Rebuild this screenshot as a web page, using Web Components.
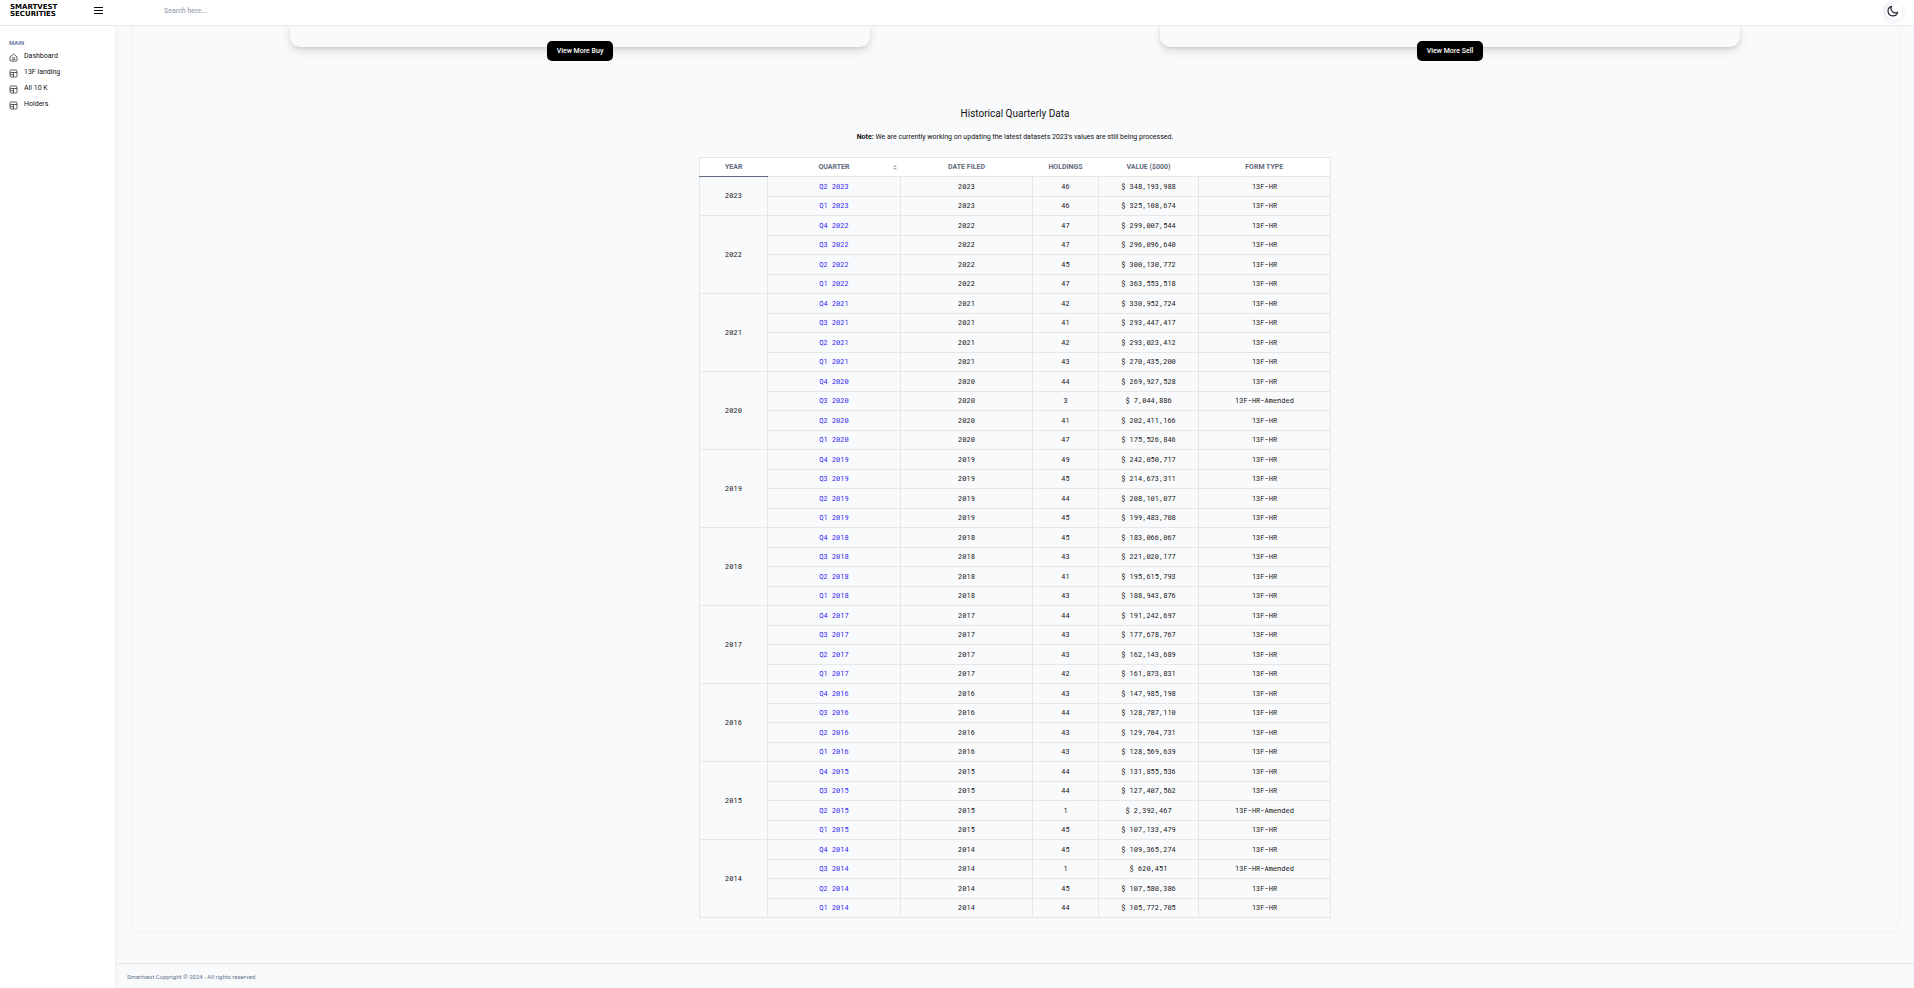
<!DOCTYPE html>
<html lang="en">
<head>
<meta charset="utf-8">
<title>Smartvest Securities</title>
<style>
  html, body { margin: 0; height: 100%; }
  body { font: 7px/10px Roboto, sans-serif; color: #111; background: #f9fafc; }
</style>
</head>
<body>
<smart-app></smart-app>
<script>
class BaseElement extends HTMLElement {
  constructor() {
    super();
    this.attachShadow({ mode: 'open' }).innerHTML = this.render();
  }
}

customElements.define('smart-logo', class extends BaseElement {
  render() {
    return `<style>
      :host { display: block; }
      a { display: block; color: #000; text-decoration: none; font: 700 7px/7px "DejaVu Sans", sans-serif; }
      span { display: block; }
    </style><a href="#"><span>SMARTVEST</span><span>SECURITIES</span></a>`;
  }
});

customElements.define('smart-header', class extends BaseElement {
  render() {
    return `<style>
      :host { display: flex; align-items: center; box-sizing: border-box; height: 26px; padding: 0 11px 4px 10px;
        background: #fff; border-bottom: 1px solid #e5e7eb; }
      smart-logo { width: 84px; }
      button { border: 0; padding: 0; background: none; display: block; }
      svg { display: block; }
      input { flex: 1; margin-left: 61px; padding: 0; border: 0; outline: 0; background: none;
        font: 500 7px/10px Roboto, sans-serif; color: #111; }
      input::placeholder { color: #a0a8b5; opacity: 1; }
      .theme { width: 20px; height: 20px; border-radius: 50%; display: grid; place-items: center;
        background: #fff; box-shadow: inset 3px 1px 4px #e8edf6, 1px 2px 4px #eef1f6; }
    </style>
    <smart-logo></smart-logo>
    <button aria-label="Toggle menu"><svg width="9" height="7" viewBox="0 0 9 7"><path d="M0 0h9v1H0zM0 3h9v1H0zM0 6h9v1H0z"/></svg></button>
    <input type="search" aria-label="Search" placeholder="Search here...">
    <button class="theme" aria-label="Dark mode"><svg width="12" height="12" viewBox="0 0 12 12" fill="none" stroke="#262a30" stroke-width="1.2" stroke-linejoin="round"><path d="M4.600 1.300a4.400 4.400 0 0 0 6.100 5.900A4.900 4.900 0 1 1 4.600 1.300z"/></svg></button>`;
  }
});

const ICONS = {
  home: '<path d="M1 4 4.500 1 8 4v3.200a.9.9 0 0 1-.9.9H1.900a.9.9 0 0 1-.9-.9z"/><path d="M2.700 6.300h3.600M3.200 4.800h2.600"/>',
  table: '<rect x="1" y="1" width="7" height="7" rx="1"/><path d="M1 3.500h7M4.500 3.500V8M1 5.700h3"/>'
};
customElements.define('nav-item', class extends HTMLElement {
  connectedCallback() {
    this.attachShadow({ mode: 'open' }).innerHTML = `<style>
      :host { display: block; height: 16px; }
      a { display: flex; align-items: flex-start; gap: 6px; color: #111318; text-decoration: none; }
      svg { margin-top: 2px; flex: none; }
    </style><a href="#"><svg width="9" height="9" viewBox="0 0 9 9" fill="none" stroke="#4a4a4a" stroke-width=".9">${ICONS[this.getAttribute('icon')]}</svg><slot></slot></a>`;
  }
});

customElements.define('smart-sidebar', class extends BaseElement {
  render() {
    return `<style>
      :host { display: block; background: #fff; padding: 12px 8px 12px 9px; box-shadow: 1px 0 5px rgba(0,0,0,.05); }
      h2 { margin: 0 0 3px; font: 700 6px/10px Roboto, sans-serif; color: #6b7ba3; }
    </style>
    <h2>MAIN</h2>
    <nav>
      <nav-item icon="home">Dashboard</nav-item>
      <nav-item icon="table">13F landing</nav-item>
      <nav-item icon="table">All 10 K</nav-item>
      <nav-item icon="table">Holders</nav-item>
    </nav>`;
  }
});

customElements.define('holding-card', class extends BaseElement {
  render() {
    return `<style>
      :host { display: flex; flex-direction: column; align-items: center; }
      .card { width: 66.667%; height: 21px; border-radius: 0 0 10px 10px; background: #f9fafc;
        box-shadow: 0 4px 8px rgba(0,0,0,.13), 0 1px 3px rgba(0,0,0,.09); }
      button { margin-top: -6px; height: 20px; min-width: 66px; padding: 0 9px; border: 0; border-radius: 5px;
        background: #000; color: #fff; font: 500 7px/20px Roboto, sans-serif; }
    </style><div class="card"></div><button><slot></slot></button>`;
  }
});

const AMENDED = '13F-HR-Amended';
const FILINGS = [
  [2023, [[46, '348,193,988'], [46, '325,108,674']]],
  [2022, [[47, '299,007,544'], [47, '296,096,640'], [45, '300,130,772'], [47, '363,553,518']]],
  [2021, [[42, '330,952,724'], [41, '293,447,417'], [42, '293,023,412'], [43, '270,435,200']]],
  [2020, [[44, '269,927,528'], [3, '7,044,886', AMENDED], [41, '202,411,166'], [47, '175,526,846']]],
  [2019, [[49, '242,050,717'], [45, '214,673,311'], [44, '208,101,077'], [45, '199,483,708']]],
  [2018, [[45, '183,066,067'], [43, '221,020,177'], [41, '195,615,793'], [43, '188,943,876']]],
  [2017, [[44, '191,242,697'], [43, '177,678,767'], [43, '162,143,689'], [42, '161,873,831']]],
  [2016, [[43, '147,985,198'], [44, '128,787,110'], [43, '129,704,731'], [43, '128,569,639']]],
  [2015, [[44, '131,855,536'], [44, '127,407,562'], [1, '2,392,467', AMENDED], [45, '107,133,479']]],
  [2014, [[45, '109,365,274'], [1, '620,451', AMENDED], [45, '107,580,386'], [44, '105,772,705']]]
];
customElements.define('filings-table', class extends BaseElement {
  render() {
    const rows = FILINGS.map(([year, quarters]) => quarters.map(([holdings, value, form = '13F-HR'], i) =>
      `<tr>${i ? '' : `<td rowspan="${quarters.length}">${year}</td>`}<td><a href="#">Q${quarters.length - i} ${year}</a></td><td>${year}</td><td>${holdings}</td><td>$ ${value}</td><td>${form}</td></tr>`
    ).join('')).join('');
    return `<style>
      :host { display: block; width: 100%; max-width: 632px; margin: 0 auto; }
      table { width: 100%; table-layout: fixed; border-collapse: collapse; text-align: center; }
      th, td { padding: 0; }
      thead { background: #fff; }
      thead tr { height: 19px; border: 1px solid #e5e7eb; }
      th { font-weight: 700; color: #626a80; }
      th:first-child { border-bottom: 1px solid #626a80; }
      .sortable { display: grid; grid-template-columns: 1fr auto 1fr; align-items: center; }
      .sortable span { grid-column: 2; }
      .sortable button { justify-self: end; margin-right: 4px; border: 0; padding: 0; background: none; }
      svg { display: block; }
      td { border: 1px solid #e5e7eb; font: 7px/10px "Roboto Mono", "Liberation Mono", monospace; }
      tbody tr:nth-child(odd) { height: 20px; }
      tbody tr:nth-child(even) { height: 19px; }
      a { color: #2b1cf5; text-decoration: none; }
      .year { width: 68px; } .quarter { width: 133px; } .wide { width: 132px; }
      .holdings { width: 66px; } .value { width: 100px; }
    </style>
    <table>
      <colgroup><col class="year"><col class="quarter"><col class="wide"><col class="holdings"><col class="value"><col class="wide"></colgroup>
      <thead><tr><th>YEAR</th><th><div class="sortable"><span>QUARTER</span><button aria-label="Sort by quarter"><svg width="4" height="5" viewBox="0 0 4 5" fill="#a9adb5"><path d="M0 2 2 0l2 2zM0 3 2 5l2-2z"/></svg></button></div></th><th>DATE FILED</th><th>HOLDINGS</th><th>VALUE ($000)</th><th>FORM TYPE</th></tr></thead>
      <tbody>${rows}</tbody>
    </table>`;
  }
});

customElements.define('smart-app', class extends BaseElement {
  render() {
    return `<style>
      :host { display: grid; grid-template: auto 1fr / 115px 1fr; min-height: 100vh; }
      smart-header { grid-column: 1 / -1; position: relative; z-index: 1; }
      .content { display: flex; flex-direction: column; }
      main { margin: 0 16px 32px 18px; padding: 0 13px 13px 12px; border-radius: 0 0 10px 10px;
        box-shadow: 0 1px 4px rgba(0,0,0,.05); }
      .cards { display: grid; grid-template-columns: 1fr 1fr; margin-bottom: 47px; }
      h1 { margin: 0 0 12px; font: 400 10px/12px Roboto, sans-serif; text-align: center; }
      p { margin: 0 0 15px; text-align: center; }
      b { font-weight: 700; }
      footer { flex: 1; border-top: 1px solid #e5e7eb; padding: 8px 12px 0; color: #64748b; font-size: 6px; }
    </style>
    <smart-header></smart-header>
    <smart-sidebar></smart-sidebar>
    <div class="content">
      <main>
        <div class="cards"><holding-card>View More Buy</holding-card><holding-card>View More Sell</holding-card></div>
        <h1>Historical Quarterly Data</h1>
        <p><b>Note:</b> We are currently working on updating the latest datasets 2023's values are still being processed.</p>
        <filings-table></filings-table>
      </main>
      <footer>Smartvest Copyright © 2024 - All rights reserved.</footer>
    </div>`;
  }
});
</script>
</body>
</html>
